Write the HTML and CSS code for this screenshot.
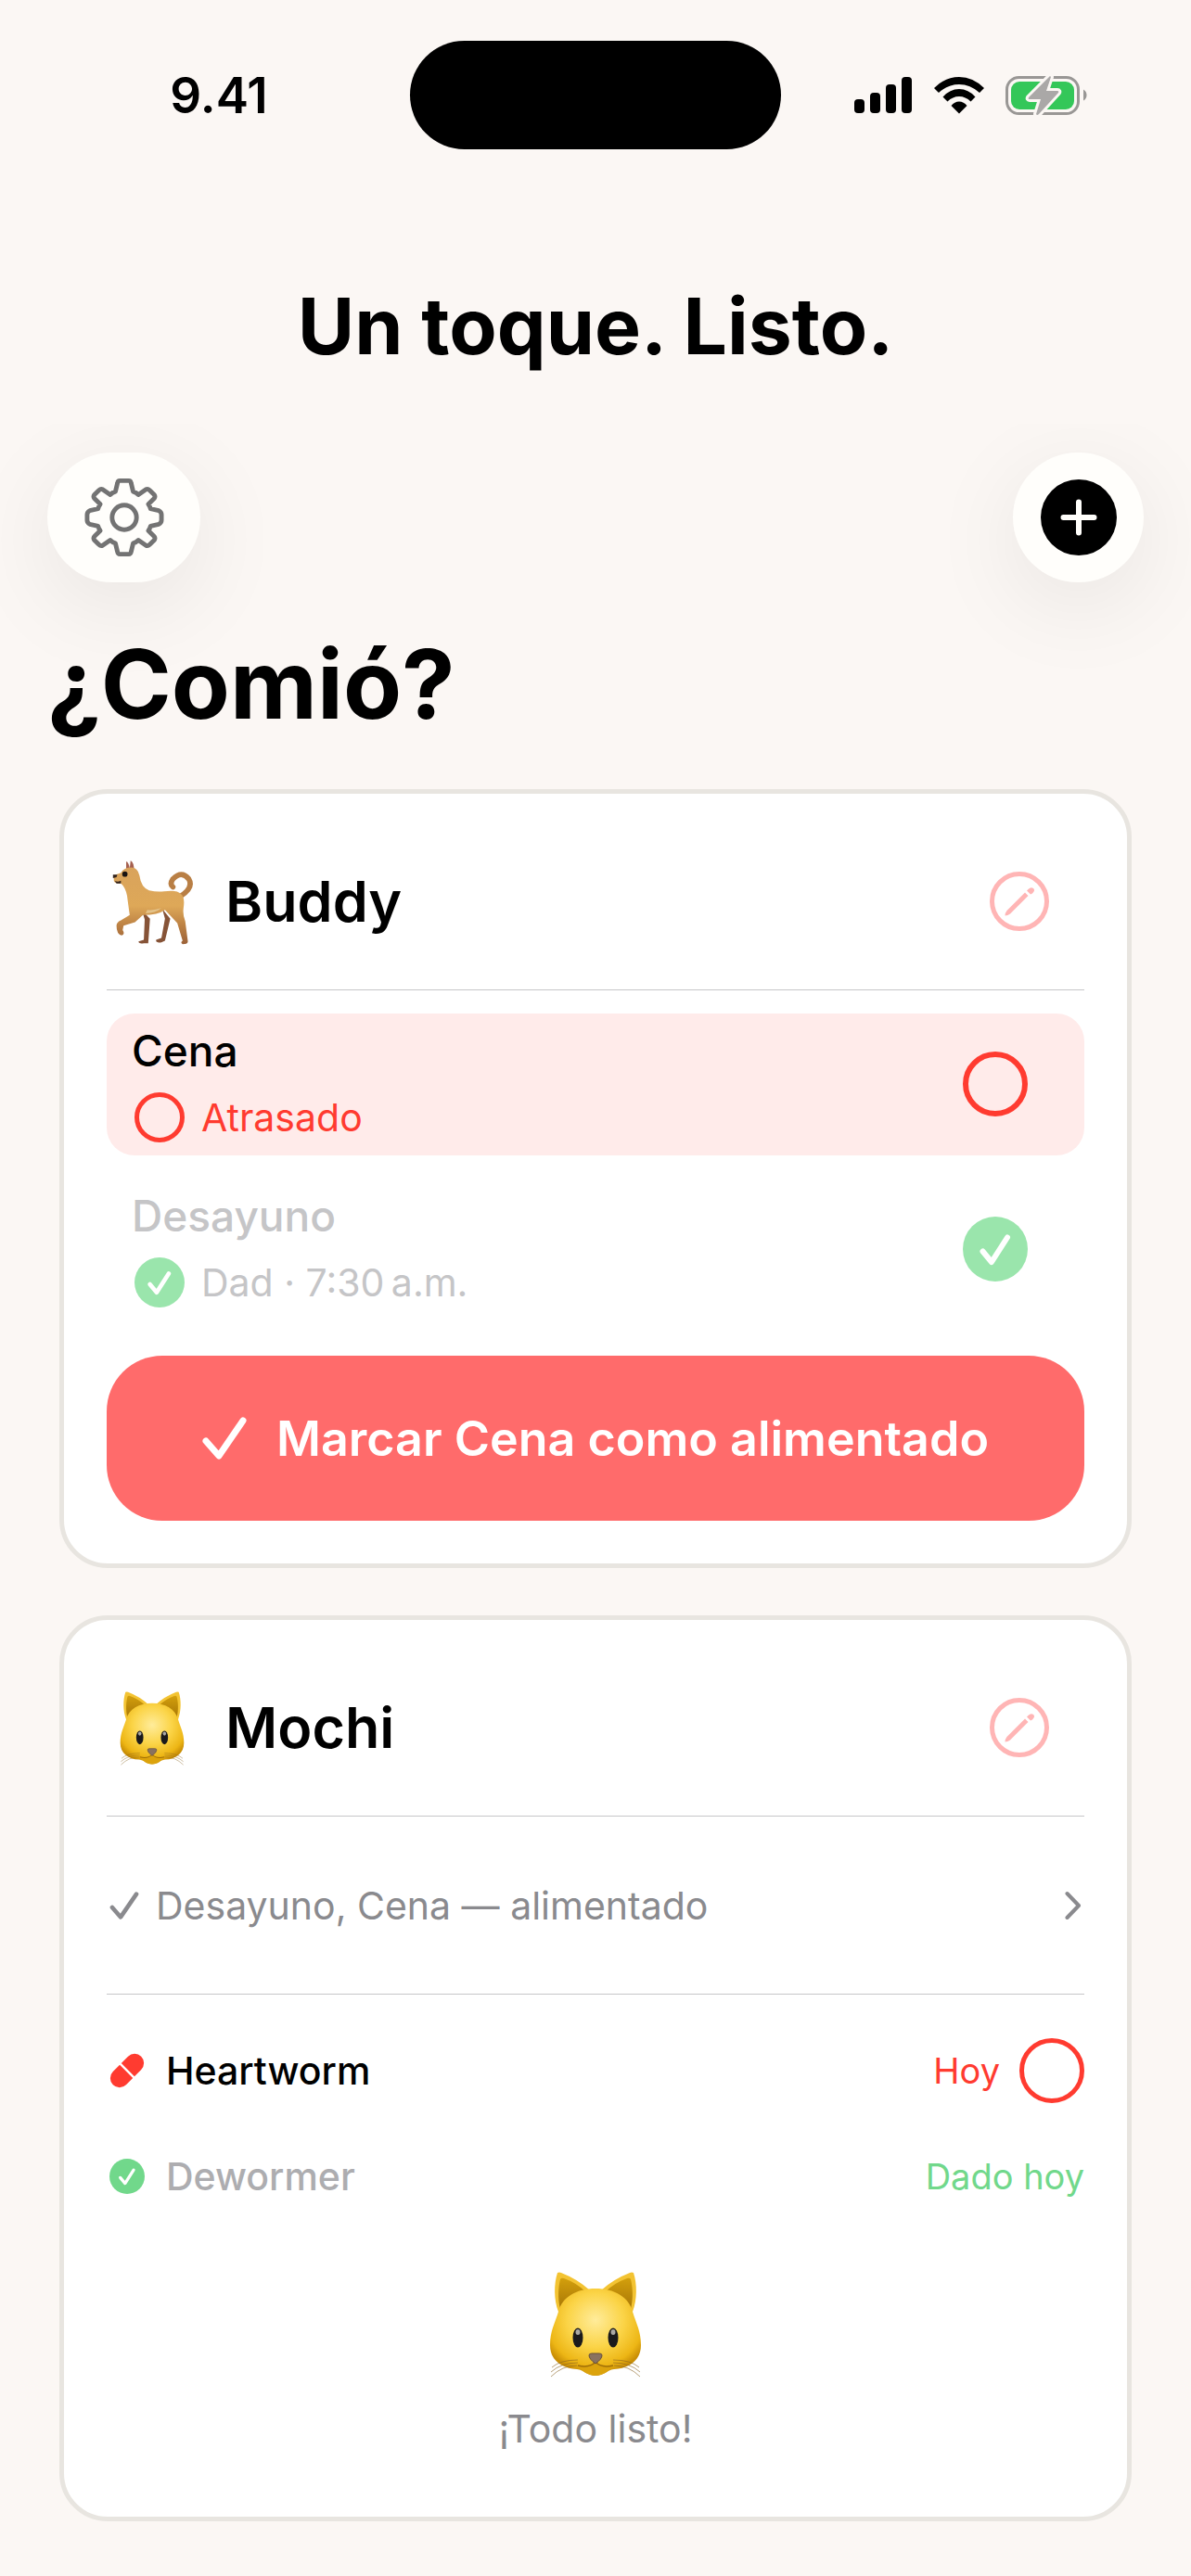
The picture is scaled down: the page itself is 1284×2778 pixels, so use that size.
FILE: index.html
```html
<!DOCTYPE html>
<html lang="es">
<head>
  <meta charset="UTF-8">
  <meta name="viewport" content="width=device-width, initial-scale=1.0">
  <title>¿Comió?</title>
  <link rel="stylesheet" href="styles.css">
</head>
<body>
  <!-- shared icons -->
  <svg class="sprite" aria-hidden="true">
    <symbol id="check" viewBox="0 0 48 46">
      <path d="M4 26L18 42L44 4" fill="none" stroke="currentColor" stroke-width="7" stroke-linecap="round" stroke-linejoin="round"/>
    </symbol>
    <symbol id="check-circle" viewBox="0 0 70 70">
      <circle cx="35" cy="35" r="35" fill="currentColor"/>
      <path d="M21.500 37.500L31 49L48 22.500" fill="none" stroke="#fff" stroke-width="6" stroke-linecap="round" stroke-linejoin="round"/>
    </symbol>
    <symbol id="edit" viewBox="0 0 64 64">
      <circle cx="32" cy="32" r="29.500" fill="none" stroke="currentColor" stroke-width="5"/>
      <path d="M16.500 47.500q0-3 2-5.500L38 22.500l3.500 3.500L22 45.500q-2.500 2-5.500 2zM40 20.500l1.500-1.500q3-3 5.500-1t-1 5.500L44 24.500z" fill="currentColor"/>
    </symbol>
    <symbol id="cat" viewBox="0 0 100 114">
      <defs>
        <radialGradient id="catFace" cx="50%" cy="36%" r="62%">
          <stop offset="0" stop-color="#ffec9b"/>
          <stop offset=".5" stop-color="#fbd447"/>
          <stop offset=".85" stop-color="#edb615"/>
          <stop offset="1" stop-color="#c98e05"/>
        </radialGradient>
        <linearGradient id="catEar" x1="0" y1="0" x2="0" y2="1">
          <stop offset="0" stop-color="#d39f0c"/>
          <stop offset="1" stop-color="#a87706"/>
        </linearGradient>
      </defs>
      <path d="M10 43C5 30 5 13 9 1q2-1 4 0q18 7 31 19L30 40zM90 43c5-13 5-30 1-42q-2-1-4 0q-18 7-31 19l14 20z" fill="#f3c332"/>
      <path d="M12 40C9 28 10 16 12 8q1-2 4-1q14 5 24 15zM88 40c3-12 2-24 0-32q-1-2-4-1q-14 5-24 15z" fill="url(#catEar)"/>
      <path d="M50 18c-20 0-36 9-40 25C6 56 1 64 1 79c0 16 12 25 29 26c8 1 11 7 20 7s12-6 20-7c17-1 29-10 29-26c0-15-5-23-9-36C86 27 70 18 50 18z" fill="url(#catFace)"/>
      <path d="M31 101q13 3 19-4q6 7 19 4q-8 11-19 11t-19-11z" fill="#dca30c"/>
      <path d="M31 101q13 3 19-4q6 7 19 4M50 91v6" fill="none" stroke="#a06f08" stroke-width="1.500"/>
      <ellipse cx="31" cy="71" rx="5.500" ry="10.500" fill="#1b1a1c"/>
      <ellipse cx="69" cy="71" rx="5.500" ry="10.500" fill="#1b1a1c"/>
      <ellipse cx="31" cy="65" rx="2.500" ry="3" fill="#aaa8a4"/>
      <ellipse cx="69" cy="65" rx="2.500" ry="3" fill="#aaa8a4"/>
      <path d="M43 90q0-2 3-2h8q3 0 3 2q0 4-7 9q-7-5-7-9z" fill="#897260" stroke="#66503d" stroke-width="1"/>
      <path d="M31 95Q12 95 3 103M31 98Q13 98 2 108M30 101Q14 101 2 113M69 95q19 0 28 8M69 98q18 0 29 10M70 101q16 0 28 12" fill="none" stroke="#8a6424" stroke-opacity=".6" stroke-width="1"/>
    </symbol>
  </svg>

  <div class="status-bar">
    <span class="time">9.41</span>
    <div class="island"></div>
    <div class="indicators">
      <svg width="63" height="40" viewBox="0 0 63 40">
        <rect x="0" y="24" width="11" height="15" rx="4"/>
        <rect x="17" y="17" width="11" height="22" rx="4"/>
        <rect x="34" y="8" width="11" height="31" rx="4"/>
        <rect x="51" y="0" width="11" height="39" rx="4"/>
      </svg>
      <svg width="54" height="40" viewBox="0 0 54 40">
        <path d="M0 12Q12 0 27 0t27 12l-5 5Q39 8 27 8T5 17z"/>
        <path d="M9.500 21.500Q17 13 27 13t17.500 8.500l-5 5Q34 21 27 21t-12.500 5.500z"/>
        <path d="M18.500 31Q22 26.500 27 26.500t8.500 4.500L27 39.500z"/>
      </svg>
      <svg width="88" height="44" viewBox="0 0 88 44">
        <rect x="1.500" y="2.500" width="77" height="39" rx="13" fill="none" stroke="#999795" stroke-width="3"/>
        <rect x="6" y="7" width="68" height="30" rx="9" fill="#34c759"/>
        <path d="M84 15.500q3.500 2 3.500 6t-3.500 6z" fill="#999795"/>
        <path d="M48 1L25 24q-1 2 1 2h12l-5 16q1 2 3 0l21-23q1-2-1-2H44l5-15z" fill="#aaa8a7" stroke="#fbf7f4" stroke-width="6" stroke-linejoin="round" paint-order="stroke"/>
      </svg>
    </div>
  </div>

  <h1 class="headline">Un toque. Listo.</h1>

  <div class="toolbar">
    <button class="tool-button settings" aria-label="Ajustes">
      <svg width="86" height="86" viewBox="-44 -44 88 88" fill="none" stroke="#737373" stroke-width="5" stroke-linejoin="round">
        <circle r="13.500"/>
        <path d="M-5 -40.500H5Q7 -40.500 7.500 -38L9.800 -28.500Q13 -27.500 15.500 -25L24 -31Q26 -32 28 -30L33 -25Q34.500 -23 33 -21L26.500 -14.500Q28.500 -12 29 -9.500L38 -7.500Q41 -6 41 -3V3Q41 6 38 7.500L29 9.500Q28.500 12 26.500 14.500L33 21Q34.500 23 33 25L28 30Q26 32 24 31L15.500 25Q13 27.500 9.800 28.500L7.500 38Q7 40.500 5 40.500H-5Q-7 40.500 -7.500 38L-9.800 28.500Q-13 27.500 -15.500 25L-24 31Q-26 32 -28 30L-33 25Q-34.500 23 -33 21L-26.500 14.500Q-28.500 12 -29 9.500L-38 7.500Q-41 6 -41 3V-3Q-41 -6 -38 -7.500L-29 -9.500Q-28.500 -12 -26.500 -14.500L-33 -21Q-34.500 -23 -33 -25L-28 -30Q-26 -32 -24 -31L-15.500 -25Q-13 -27.500 -9.800 -28.500L-7.500 -38Q-7 -40.500 -5 -40.500Z"/>
      </svg>
    </button>
    <button class="tool-button add" aria-label="Añadir">
      <svg width="82" height="82" viewBox="0 0 82 82">
        <circle cx="41" cy="41" r="41"/>
        <path d="M41 24.500v33M24.500 41h33" stroke="#fffefb" stroke-width="6" stroke-linecap="round"/>
      </svg>
    </button>
  </div>

  <main>
    <h2 class="page-title">¿Comió?</h2>

    <section class="card">
      <div class="card-header">
        <svg class="avatar" viewBox="0 0 98 98">
          <defs>
            <linearGradient id="dogBody" x1="0" y1="0" x2="0" y2="1">
              <stop offset="0" stop-color="#d9a35c"/>
              <stop offset=".5" stop-color="#dea858"/>
              <stop offset=".75" stop-color="#bd8244"/>
              <stop offset="1" stop-color="#9c6238"/>
            </linearGradient>
          </defs>
          <g transform="translate(3 4) scale(.95)">
            <path d="M80 42Q96 32 90 22Q82 12 72 22q-4 6 0 9" fill="none" stroke="#b97f45" stroke-width="6" stroke-linecap="round"/>
            <path d="M37 58l3 10-1 23-6 2q0 3 6 2h5l2-28zM60 56l3 11-4 22-6 2q-1 4 6 3l4-2 6-25z" fill="#865337"/>
            <path d="M19 11l0-9q3 1 4 8l1-9q4 2 4 12z" fill="#a5604f"/>
            <path d="M5 18l8-3q3-6 12-6q7 0 9 9q2 14 11 17q9 2 17 1q15-2 19 3q5 4 3 16q-1 8 2 15l3 23q0 3-6 3q-3-2 0-4l-6-20-14-15q-8 6-25 6l-9 8-13 4-1 5q3 5-1 6q-6-1-6-11q0-4 5-6l10-6Q21 49 20 41Q18 31 13 27q-8 0-8-3z" fill="url(#dogBody)"/>
            <path d="M41 61q11 0 18-6q-9 3-16 2z" fill="#e4c38a"/>
            <path d="M4 17h5l-1 3-4 1zM6 24q3 2 7 0v3H8z" fill="#32231d"/>
            <circle cx="17.500" cy="16.500" r="3" fill="#191312"/>
          </g>
        </svg>
        <h3>Buddy</h3>
        <button class="edit-button" aria-label="Editar Buddy"><svg width="64" height="64"><use href="#edit"/></svg></button>
      </div>
      <div class="meals">
        <div class="meal late">
          <div class="meal-info">
            <div class="meal-name">Cena</div>
            <div class="meal-state"><span class="ring small"></span>Atrasado</div>
          </div>
          <button class="ring" aria-label="Marcar Cena"></button>
        </div>
        <div class="meal done">
          <div class="meal-info">
            <div class="meal-name">Desayuno</div>
            <div class="meal-state"><svg class="badge" width="54" height="54"><use href="#check-circle"/></svg>Dad · 7:30&thinsp;a.m.</div>
          </div>
          <button class="icon-button" aria-label="Desayuno marcado"><svg class="badge" width="70" height="70"><use href="#check-circle"/></svg></button>
        </div>
      </div>
      <button class="feed-button">
        <svg width="48" height="46"><use href="#check"/></svg>
        Marcar Cena como alimentado
      </button>
    </section>

    <section class="card">
      <div class="card-header">
        <svg class="avatar" viewBox="0 0 98 98"><use href="#cat" x="14" y="10" width="70" height="80"/></svg>
        <h3>Mochi</h3>
        <button class="edit-button" aria-label="Editar Mochi"><svg width="64" height="64"><use href="#edit"/></svg></button>
      </div>
      <button class="summary">
        <svg width="32" height="30"><use href="#check"/></svg>
        <span>Desayuno, Cena — alimentado</span>
        <svg width="18" height="32" viewBox="0 0 18 32"><path d="M2.500 3L15 16L2.500 29" fill="none" stroke="currentColor" stroke-width="4" stroke-linecap="round" stroke-linejoin="round"/></svg>
      </button>
      <ul class="meds">
        <li class="med">
          <svg width="38" height="38" viewBox="0 0 38 38">
            <g transform="rotate(-45 19 19)" fill="#ff3b30">
              <path d="M17.800 9H7.500a10 10 0 0 0 0 20h10.300zM20.200 9h10.300a10 10 0 0 1 0 20H20.200z"/>
            </g>
          </svg>
          <span class="med-name">Heartworm</span>
          <span class="med-due">Hoy</span>
          <button class="ring" aria-label="Marcar Heartworm"></button>
        </li>
        <li class="med given">
          <svg width="38" height="38"><use href="#check-circle"/></svg>
          <span class="med-name">Dewormer</span>
          <span class="med-due">Dado hoy</span>
        </li>
      </ul>
      <div class="all-done">
        <svg width="100" height="114"><use href="#cat"/></svg>
        <p>¡Todo listo!</p>
      </div>
    </section>
  </main>
</body>
</html>
```
FILE: styles.css
```css
* {
  box-sizing: border-box;
}

body {
  margin: 0;
  min-height: 100vh;
  background-color: #fbf7f4;
  color: #000;
  font-family: Inter, "Liberation Sans", sans-serif;
  font-size: 41px;
}

h1, h2, h3, p, ul {
  margin: 0;
  padding: 0;
}

button {
  padding: 0;
  border: none;
  background: none;
  color: inherit;
  font: inherit;
  cursor: pointer;
}

svg {
  display: block;
  flex-shrink: 0;
}

.sprite {
  position: absolute;
  width: 0;
  height: 0;
}

/* status bar */
.status-bar {
  display: grid;
  grid-template-columns: 1fr 400px 1fr;
  align-items: center;
  padding-top: 44px;
}

.time {
  padding-left: 30px;
  text-align: center;
  font-size: 53px;
  font-weight: 600;
}

.island {
  height: 117px;
  border-radius: 59px;
  background-color: #000;
}

.indicators {
  display: flex;
  align-items: center;
  justify-content: center;
  gap: 23px;
  padding-right: 34px;
}

.headline {
  margin-top: 136px;
  text-align: center;
  font-size: 84px;
  font-weight: 700;
  line-height: 110px;
}

/* toolbar */
.toolbar {
  display: flex;
  justify-content: space-between;
  margin-top: 50px;
  padding: 31px 51px 0;
  clip-path: inset(0 0 -200px 0);
}

.tool-button {
  display: flex;
  align-items: center;
  justify-content: center;
  height: 140px;
  border-radius: 70px;
  background-color: #fffefb;
  box-shadow: 0 24px 100px rgba(0, 0, 0, 0.08);
}

.settings {
  width: 165px;
}

.add {
  width: 141px;
}

main {
  display: flex;
  flex-direction: column;
  gap: 51px;
  padding: 48px 64px 56px;
}

.page-title {
  margin-left: -13px;
  font-size: 103px;
  font-weight: 700;
  line-height: 124px;
}

/* cards */
.card {
  padding: 46px;
  border: 5px solid #e8e5e0;
  border-radius: 52px;
  background-color: #fff;
}

.card-header {
  display: flex;
  align-items: center;
  height: 166px;
  padding-right: 38px;
  padding-bottom: 26px;
  border-bottom: 1px solid #c6c6c8;
}

.avatar {
  width: 98px;
  height: 98px;
}

h3 {
  flex: 1;
  margin-left: 30px;
  font-size: 61px;
  font-weight: 600;
}

.edit-button {
  color: #ffb5b5;
}

.meals {
  display: flex;
  flex-direction: column;
  gap: 25px;
  margin: 25px 0 38px;
}

.meal {
  display: flex;
  align-items: center;
  justify-content: space-between;
  padding: 12px 61px 14px 27px;
  border-radius: 30px;
}

.meal-name {
  margin-bottom: 16px;
  font-size: 46px;
  font-weight: 500;
  line-height: 57px;
}

.meal-state {
  display: flex;
  align-items: center;
  gap: 18px;
  height: 54px;
  padding-left: 3px;
}

.late {
  background-color: #ffebea;
}

.late .meal-state {
  color: #ff3b30;
}

.done {
  color: #c5c5c7;
}

.badge {
  color: #9ae5ac;
}

.ring {
  display: block;
  width: 70px;
  height: 70px;
  border: 5px solid #ff3b30;
  border-radius: 50%;
}

.meal > .ring {
  border-width: 6px;
}

.ring.small {
  width: 54px;
  height: 54px;
}

.feed-button {
  display: flex;
  align-items: center;
  justify-content: center;
  gap: 32px;
  width: 100%;
  height: 178px;
  border-radius: 60px;
  background-color: #ff6b6b;
  color: #fff;
  font-size: 52px;
  font-weight: 600;
}

.summary {
  display: flex;
  align-items: center;
  gap: 18px;
  width: 100%;
  height: 192px;
  padding: 0 3px;
  border-bottom: 1px solid #c6c6c8;
  color: #8a8a8e;
  text-align: left;
}

.summary span {
  flex: 1;
}

.meds {
  list-style: none;
  padding-top: 47px;
}

.med {
  display: flex;
  align-items: center;
  height: 70px;
  padding-left: 3px;
}

.med + .med {
  margin-top: 44px;
}

.med-name {
  flex: 1;
  margin-left: 23px;
  font-weight: 500;
}

.med-due {
  color: #ff3b30;
  font-size: 38px;
}

.med .ring {
  margin-left: 21px;
}

.given,
.given .med-due {
  color: #71d88b;
}

.given .med-name {
  color: #adadb0;
}

.all-done {
  display: flex;
  flex-direction: column;
  align-items: center;
  padding: 68px 0 22px;
  color: #8a8a8e;
}

.all-done p {
  margin-top: 28px;
  line-height: 54px;
}
```
